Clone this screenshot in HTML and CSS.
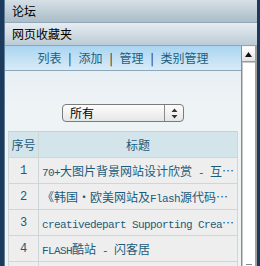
FILE: index.html
```html
<!DOCTYPE html>
<html lang="zh-CN">
<head>
    <meta charset="UTF-8">
    <title>网页收藏夹</title>
    <link rel="stylesheet" href="styles.css">
</head>
<body>
    <div class="frame">
        <div class="bar bar-top">论坛</div>
        <div class="bar bar-sub">网页收藏夹</div>
        <div class="main">
            <div class="content">
                <div class="nav">
                    <a href="#">列表</a><span class="sep">|</span><a href="#">添加</a><span class="sep">|</span><a href="#">管理</a><span class="sep">|</span><a href="#">类别管理</a>
                </div>
                <div class="filter">
                    <div class="select">
                        <span class="select-value">所有</span>
                        <span class="select-arrows">
                            <svg width="7" height="11" viewBox="0 0 7 11"><path d="M3.5 0.5 L6.5 4 L0.5 4 Z M0.5 7 L6.5 7 L3.5 10.5 Z" fill="#333"/></svg>
                        </span>
                    </div>
                </div>
                <table class="list">
                    <tr>
                        <th class="num">序号</th>
                        <th>标题</th>
                    </tr>
                    <tr>
                        <td class="num">1</td>
                        <td class="title"><span class="en">70+</span>大图片背景网站设计欣赏<span class="en"> - </span>互…</td>
                    </tr>
                    <tr>
                        <td class="num">2</td>
                        <td class="title">《韩国·欧美网站及<span class="en">Flash</span>源代码…</td>
                    </tr>
                    <tr>
                        <td class="num">3</td>
                        <td class="title"><span class="en">creativedepart Supporting Crea</span>…</td>
                    </tr>
                    <tr>
                        <td class="num">4</td>
                        <td class="title"><span class="en">FLASH</span>酷站<span class="en"> - </span>闪客居</td>
                    </tr>
                    <tr>
                        <td class="num"></td>
                        <td class="title"></td>
                    </tr>
                </table>
            </div>
            <div class="scrollbar">
                <div class="scroll-up">
                    <svg width="7" height="5" viewBox="0 0 7 5"><path d="M3.5 0 L7 5 L0 5 Z" fill="#111"/></svg>
                </div>
                <div class="scroll-track">
                    <div class="scroll-thumb"></div>
                </div>
            </div>
        </div>
    </div>
</body>
</html>
```

FILE: styles.css
```css
html, body {
    margin: 0;
    padding: 0;
}
body {
    width: 260px;
    height: 266px;
    overflow: hidden;
    background-color: #1b3a5c;
    font-family: "Noto Sans CJK SC", sans-serif;
    font-size: 12px;
}
.frame {
    margin: 0 3px 0 4px;
    height: 266px;
    border-left: 1px solid #5f7d96;
    display: flex;
    flex-direction: column;
    background-color: #eaf1f5;
    overflow: hidden;
}
.bar {
    height: 22px;
    line-height: 22px;
    padding-left: 7px;
    color: #000;
}
.bar-top {
    background: linear-gradient(#d6e0e6, #aabdc9);
    border-bottom: 1px solid #93a8b6;
}
.bar-sub {
    background: linear-gradient(#e6edf1, #bccbd5);
    border-bottom: 1px solid #8ea6b6;
}
.main {
    flex: 1;
    display: flex;
    min-height: 0;
}
.content {
    flex: 1;
    overflow: hidden;
    background: linear-gradient(#e4edf2, #eef3f6 60px);
}
.nav {
    height: 24px;
    line-height: 24px;
    text-align: center;
    background: linear-gradient(#a9d5f2, #d9ebf6);
    border-bottom: 1px solid #8aa7bb;
}
.nav a {
    color: #1a5f7f;
    text-decoration: none;
}
.sep {
    display: inline-block;
    width: 17px;
    text-align: center;
    color: #111;
}
.filter {
    padding-top: 33px;
    display: flex;
    justify-content: center;
}
.select {
    width: 120px;
    height: 16px;
    border: 1px solid #7b7b7b;
    border-radius: 4px;
    display: flex;
    background: linear-gradient(#fdfdfd, #e6e6e6);
    line-height: 16px;
}
.select-value {
    flex: 1;
    padding-left: 7px;
    color: #000;
}
.select-arrows {
    width: 18px;
    border-left: 1px solid #8a8a8a;
    display: flex;
    align-items: center;
    justify-content: center;
}
.list {
    margin: 9px 0 0 3px;
    width: 230px;
    table-layout: fixed;
    border-collapse: collapse;
    color: #1a5c7b;
}
.list th,
.list td {
    height: 25px;
    padding: 0;
    border: 1px solid #cfd6da;
    font-weight: normal;
    white-space: nowrap;
    overflow: hidden;
}
.list th {
    background-color: #d4e4eb;
    border-top-color: #c0d3dd;
    text-align: center;
}
.list td {
    background-color: #eeeeee;
}
.list .num {
    width: 29px;
    text-align: center;
    font-family: "Liberation Mono", monospace;
    font-size: 12px;
}
.list th.num {
    font-family: "Noto Sans CJK SC", sans-serif;
}
.list .title {
    padding-left: 3px;
}
.en {
    font-family: "Liberation Mono", monospace;
    font-size: 11px;
    letter-spacing: -0.6px;
}
.scrollbar {
    width: 13px;
    border-left: 1px solid #8c8c8c;
    border-right: 2px solid #a0a0a0;
    display: flex;
    flex-direction: column;
    background-color: #f4f4f4;
}
.scroll-up {
    height: 14px;
    margin-top: 1px;
    border-bottom: 1px solid #9a9a9a;
    background: linear-gradient(#ffffff, #e2e2e2);
    display: flex;
    align-items: center;
    justify-content: center;
}
.scroll-track {
    flex: 1;
    border-left: 1px solid #c8c8c8;
    border-top: 1px solid #c8c8c8;
    background-color: #ffffff;
    padding-top: 201px;
}
.scroll-thumb {
    margin: 0 3px;
    height: 1px;
    background-color: #8a8a8a;
}
```
